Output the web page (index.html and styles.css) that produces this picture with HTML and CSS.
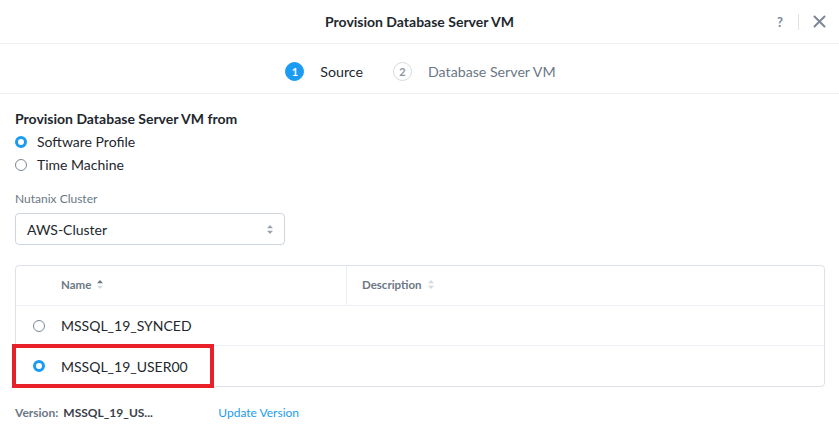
FILE: index.html
```html
<!DOCTYPE html>
<html>
<head>
<meta charset="utf-8">
<link rel="stylesheet" href="styles.css">
</head>
<body>
<div class="modal">
  <header class="head">
    <div></div>
    <div class="title">Provision Database Server VM</div>
    <div class="actions">
      <span class="help">?</span>
      <span class="sep"></span>
      <svg class="close" width="13" height="13" viewBox="0 0 13 13"><path d="M1.5 1.5L11.5 11.5M11.5 1.5L1.5 11.5" stroke="#7b8796" stroke-width="2" stroke-linecap="round"/></svg>
    </div>
  </header>
  <nav class="steps">
    <div class="step active"><span class="num">1</span><span class="lbl">Source</span></div>
    <div class="step"><span class="num">2</span><span class="lbl">Database Server VM</span></div>
  </nav>
  <main class="body">
    <div class="section-title">Provision Database Server VM from</div>
    <label class="opt"><span class="radio on"></span>Software Profile</label>
    <label class="opt"><span class="radio"></span>Time Machine</label>
    <div class="field-label">Nutanix Cluster</div>
    <div class="select">
      <span>AWS-Cluster</span>
      <svg width="6" height="9" viewBox="0 0 6 9"><path d="M3 0L6 3.2H0Z M3 9L0 5.8H6Z" fill="#9aa4b0"/></svg>
    </div>
    <div class="table">
      <div class="row thead">
        <div class="c1"><span class="hname">Name</span>
          <svg width="6" height="9" viewBox="0 0 6 9"><path d="M3 0L6 3.2H0Z" fill="#6b7785"/><path d="M3 9L0 5.8H6Z" fill="#d3d9e0"/></svg>
        </div>
        <div class="c2"><span class="hname">Description</span>
          <svg width="6" height="9" viewBox="0 0 6 9"><path d="M3 0L6 3.2H0Z M3 9L0 5.8H6Z" fill="#d3d9e0"/></svg>
        </div>
      </div>
      <div class="row">
        <div class="c1"><span class="radio sm"></span><span class="name">MSSQL_19_SYNCED</span></div>
        <div class="c2"></div>
      </div>
      <div class="row last">
        <div class="c1"><span class="radio sm on"></span><span class="name">MSSQL_19_USER00</span></div>
        <div class="c2"></div>
        <div class="highlight"></div>
      </div>
    </div>
    <div class="version">
      <span class="vlabel">Version:</span><span class="vval">MSSQL_19_US...</span>
      <a class="link">Update Version</a>
    </div>
  </main>
</div>
</body>
</html>
```
FILE: styles.css
```css
* { box-sizing: border-box; }
html, body { margin: 0; padding: 0; background: #fff; }
body { font-family: Lato, "Open Sans", Arial, sans-serif; color: #22272e; width: 839px; height: 432px; overflow: hidden; }

.head {
  height: 44px;
  border-bottom: 1px solid #eceff3;
  display: grid;
  grid-template-columns: 1fr auto 1fr;
  align-items: center;
}
.title { font-size: 14px; font-weight: 700; color: #22272e; }
.actions { display: flex; justify-content: flex-end; align-items: center; padding-right: 13px; }
.help { font-size: 13px; font-weight: 700; color: #7b8796; margin-right: 15px; }
.sep { width: 1px; height: 16px; background: #dfe3e8; margin-right: 14px; }

.steps {
  height: 50px;
  border-bottom: 1px solid #eceff3;
  display: flex;
  justify-content: center;
  align-items: center;
  gap: 30px;
  padding-top: 6px;
  padding-left: 2px;
}
.step { display: flex; align-items: center; }
.num {
  width: 19px; height: 19px; border-radius: 50%;
  border: 1px solid #d6dbe1; color: #8b95a2;
  font-size: 11px; font-weight: 700;
  display: flex; align-items: center; justify-content: center;
  margin-right: 16px;
}
.step.active .num { background: #1b9cf2; border-color: #1b9cf2; color: #fff; }
.lbl { font-size: 14.2px; color: #6b7785; }
.step.active .lbl { color: #22272e; }

.body { padding: 0 15px; }
.section-title { font-size: 14px; font-weight: 700; margin-top: 17px; line-height: 16px; }
.opt { display: flex; align-items: center; font-size: 14px; height: 23px; color: #22272e; }
.opt:first-of-type { margin-top: 3px; }
.radio {
  width: 12px; height: 12px; border-radius: 50%;
  border: 1px solid #7b8796; background: #fff;
  margin-left: 0; margin-right: 10px; flex: none;
}
.radio.on { border: 3.5px solid #1b9cf2; }
.field-label { font-size: 12px; color: #6b7785; margin-top: 16px; line-height: 14px; }
.select {
  margin-top: 7px;
  width: 270px; height: 32px;
  border: 1px solid #cfd5dc; border-radius: 4px;
  display: flex; align-items: center; justify-content: space-between;
  padding: 0 11px 0 11px;
  font-size: 14px; color: #22272e;
}

.table {
  margin-top: 20px;
  border: 1px solid #dde2e8; border-radius: 4px;
  width: 810px;
}
.row { display: flex; height: 40px; border-bottom: 1px solid #eceff3; position: relative; }
.row.last { border-bottom: none; height: 40px; }
.thead .c1, .thead .c2 { padding-bottom: 3px; }
.c1 { width: 330px; display: flex; align-items: center; padding-left: 45px; gap: 6px; }
.row:not(.thead) .c1 { padding-left: 17px; gap: 0; }
.c2 { flex: 1; display: flex; align-items: center; padding-left: 15px; gap: 6px; }
.thead .c2 { border-left: 1px solid #eceff3; }
.hname { font-size: 11.5px; font-weight: 700; color: #6b7785; }
.row .radio.sm { width: 12px; height: 12px; margin-left: 0; margin-right: 16px; }
.row .radio.sm.on { border-width: 3.5px; }
.name { font-size: 14px; color: #22272e; }

.highlight {
  position: absolute;
  left: -4px; top: -2px;
  width: 202px; height: 44px;
  border: 4px solid #e8202a;
}

.version { margin-top: 18px; display: flex; align-items: center; font-size: 12px; font-weight: 700; }
.vlabel { color: #6b7785; margin-right: 5px; }
.vval { color: #3a414a; width: 155px; }
.link { color: #1b9cf2; font-weight: 400; font-size: 12px; }
```
